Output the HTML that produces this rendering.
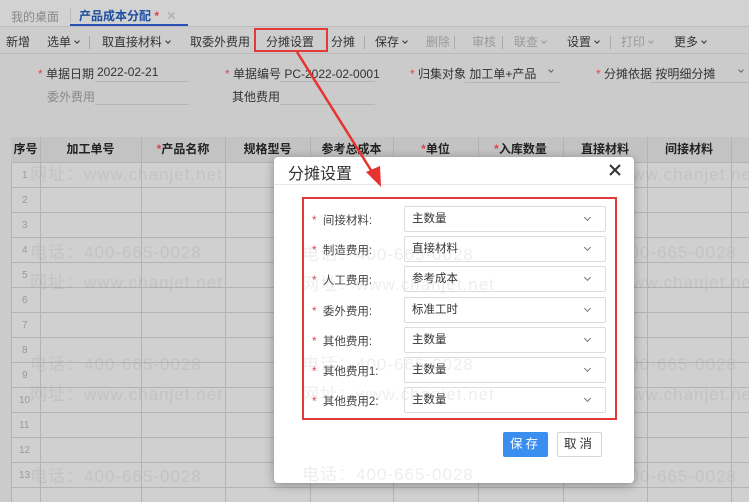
<!DOCTYPE html>
<html><head><meta charset="utf-8"><style>
*{margin:0;padding:0;box-sizing:border-box}
body{width:749px;height:502px;overflow:hidden;background:#cbcbcb;font-family:"Liberation Sans","Noto Sans CJK SC",sans-serif;font-size:12px;color:#333;position:relative}
.a{position:absolute;white-space:nowrap}
.wm{position:absolute;font-size:17px;color:rgba(150,150,150,.22);white-space:nowrap;letter-spacing:1px}
.th{position:absolute;top:137px;height:25px;line-height:25px;font-weight:bold;font-size:12px;color:#222;text-align:center}
.st{color:#d9474f}
.sel{position:absolute;left:404px;width:202px;height:26px;border:1px solid #dcdcdc;border-radius:2px;background:#fff;line-height:24px;padding-left:7px;font-size:11.5px;color:#333}
.sel i{position:absolute;right:15px;top:8px;width:5px;height:5px;border-right:1.3px solid #777;border-bottom:1.3px solid #777;transform:rotate(45deg)}
.lb{position:absolute;left:312px;font-size:11.5px;color:#444}
.tb{position:absolute;top:33px;font-size:12px;color:#333}
.dim{color:#999}
.cv{display:inline-block;width:4px;height:4px;border-right:1.3px solid currentColor;border-bottom:1.3px solid currentColor;transform:rotate(45deg);margin-left:4px;vertical-align:3px}
</style></head><body>
<div class="a" style="left:0;top:0;width:749px;height:26px;background:#d2d2d2"></div>
<div class="a" style="left:11px;top:8px;color:#888">我的桌面</div>
<div class="a" style="left:70px;top:8px;width:1px;height:14px;background:#bbb"></div>
<div class="a" style="left:79px;top:7px;color:#1d4fa0;font-weight:bold">产品成本分配 <span class="st">*</span> <span style="color:#aaa;font-weight:normal;margin-left:4px">✕</span></div>
<div class="a" style="left:70px;top:24px;width:118px;height:2px;background:#2c4fb5"></div>
<div class="a" style="left:0;top:26px;width:749px;height:1px;background:#bdbdbd"></div>
<div class="a" style="left:0;top:27px;width:749px;height:26px;background:#cdcdcd"></div>
<div class="a" style="left:0;top:53px;width:749px;height:1px;background:#bbb"></div>
<div class="tb" style="left:6px">新增</div>
<div class="tb" style="left:47px">选单<span class="cv"></span></div>
<div class="a" style="left:89px;top:36px;width:1px;height:13px;background:#aaa"></div>
<div class="tb" style="left:102px">取直接材料<span class="cv"></span></div>
<div class="tb" style="left:190px">取委外费用</div>
<div class="a" style="left:254px;top:28px;width:74px;height:24px;border:2px solid #e23a3a"></div>
<div class="tb" style="left:266px">分摊设置</div>
<div class="tb" style="left:331px">分摊</div>
<div class="a" style="left:364px;top:36px;width:1px;height:13px;background:#aaa"></div>
<div class="tb" style="left:375px">保存<span class="cv"></span></div>
<div class="tb dim" style="left:426px">删除</div>
<div class="a" style="left:454px;top:36px;width:1px;height:13px;background:#aaa"></div>
<div class="tb dim" style="left:472px">审核</div>
<div class="a" style="left:502px;top:36px;width:1px;height:13px;background:#aaa"></div>
<div class="tb dim" style="left:514px">联查<span class="cv"></span></div>
<div class="tb" style="left:567px">设置<span class="cv"></span></div>
<div class="a" style="left:610px;top:36px;width:1px;height:13px;background:#aaa"></div>
<div class="tb dim" style="left:621px">打印<span class="cv"></span></div>
<div class="tb" style="left:674px">更多<span class="cv"></span></div>
<div class="a" style="left:38px;top:65px"><span class="st">*</span> 单据日期</div>
<div class="a" style="left:97px;top:65px">2022-02-21</div>
<div class="a" style="left:95px;top:81px;width:94px;height:1px;background:#b5b5b5"></div>
<div class="a" style="left:47px;top:88px;color:#888">委外费用</div>
<div class="a" style="left:95px;top:104px;width:94px;height:1px;background:#b5b5b5"></div>
<div class="a" style="left:225px;top:65px"><span class="st">*</span> 单据编号 PC-2022-02-0001</div>
<div class="a" style="left:280px;top:81px;width:95px;height:1px;background:#b5b5b5"></div>
<div class="a" style="left:232px;top:88px">其他费用</div>
<div class="a" style="left:280px;top:104px;width:95px;height:1px;background:#b5b5b5"></div>
<div class="a" style="left:410px;top:65px"><span class="st">*</span> 归集对象 加工单+产品</div>
<div class="a" style="left:545px;top:64px;color:#666"><span class="cv"></span></div>
<div class="a" style="left:465px;top:82px;width:95px;height:1px;background:#b5b5b5"></div>
<div class="a" style="left:596px;top:65px"><span class="st">*</span> 分摊依据 按明细分摊</div>
<div class="a" style="left:735px;top:64px;color:#666"><span class="cv"></span></div>
<div class="a" style="left:650px;top:82px;width:99px;height:1px;background:#b5b5b5"></div>
<div class="a" style="left:11px;top:137px;width:738px;height:365px;background:#d0d0d0;border-left:1px solid #b5b5b5;border-top:1px solid #b5b5b5"></div>
<div class="a" style="left:11px;top:137px;width:738px;height:25px;background:#c3c3c3"></div>
<svg class="a" style="left:0;top:0" width="749" height="502">
<g stroke="#b3b3b3" stroke-width="1">
<line x1="40.5" y1="137" x2="40.5" y2="502"/><line x1="141.5" y1="137" x2="141.5" y2="502"/><line x1="225.5" y1="137" x2="225.5" y2="502"/><line x1="310.5" y1="137" x2="310.5" y2="502"/><line x1="393.5" y1="137" x2="393.5" y2="502"/><line x1="478.5" y1="137" x2="478.5" y2="502"/><line x1="563.5" y1="137" x2="563.5" y2="502"/><line x1="647.5" y1="137" x2="647.5" y2="502"/><line x1="731.5" y1="137" x2="731.5" y2="502"/>
<line x1="11" y1="162.5" x2="749" y2="162.5"/><line x1="11" y1="187.5" x2="749" y2="187.5"/><line x1="11" y1="212.5" x2="749" y2="212.5"/><line x1="11" y1="237.5" x2="749" y2="237.5"/><line x1="11" y1="262.5" x2="749" y2="262.5"/><line x1="11" y1="287.5" x2="749" y2="287.5"/><line x1="11" y1="312.5" x2="749" y2="312.5"/><line x1="11" y1="337.5" x2="749" y2="337.5"/><line x1="11" y1="362.5" x2="749" y2="362.5"/><line x1="11" y1="387.5" x2="749" y2="387.5"/><line x1="11" y1="412.5" x2="749" y2="412.5"/><line x1="11" y1="437.5" x2="749" y2="437.5"/><line x1="11" y1="462.5" x2="749" y2="462.5"/><line x1="11" y1="487.5" x2="749" y2="487.5"/>
</g>
<g fill="#999" font-size="10" font-family="Liberation Sans">
<text x="22" y="178">1</text><text x="22" y="203">2</text><text x="22" y="228">3</text><text x="22" y="253">4</text><text x="22" y="278">5</text><text x="22" y="303">6</text><text x="22" y="328">7</text><text x="22" y="353">8</text><text x="22" y="378">9</text><text x="19" y="403">10</text><text x="19" y="428">11</text><text x="19" y="453">12</text><text x="19" y="478">13</text>
</g>
</svg>
<div class="th" style="left:11px;width:29px">序号</div>
<div class="th" style="left:40px;width:101px">加工单号</div>
<div class="th" style="left:141px;width:84px"><span class="st">*</span>产品名称</div>
<div class="th" style="left:225px;width:85px">规格型号</div>
<div class="th" style="left:310px;width:83px">参考总成本</div>
<div class="th" style="left:393px;width:85px"><span class="st">*</span>单位</div>
<div class="th" style="left:478px;width:85px"><span class="st">*</span>入库数量</div>
<div class="th" style="left:563px;width:84px">直接材料</div>
<div class="th" style="left:647px;width:84px">间接材料</div>
<div class="wm" style="left:30px;top:238px">电话：400-665-0028</div>
<div class="wm" style="left:30px;top:268px">网址：www.chanjet.net</div>
<div class="wm" style="left:30px;top:350px">电话：400-665-0028</div>
<div class="wm" style="left:30px;top:380px">网址：www.chanjet.net</div>
<div class="wm" style="left:30px;top:462px">电话：400-665-0028</div>
<div class="wm" style="left:30px;top:160px">网址：www.chanjet.net</div>
<div class="wm" style="left:565px;top:160px">网址：www.chanjet.net</div>
<div class="wm" style="left:565px;top:238px">电话：400-665-0028</div>
<div class="wm" style="left:565px;top:268px">网址：www.chanjet.net</div>
<div class="wm" style="left:565px;top:350px">电话：400-665-0028</div>
<div class="wm" style="left:565px;top:380px">网址：www.chanjet.net</div>
<div class="wm" style="left:565px;top:462px">电话：400-665-0028</div>
<div class="a" style="left:274px;top:157px;width:360px;height:326px;background:#fff;border-radius:4px;box-shadow:0 2px 10px rgba(0,0,0,.35)"></div>
<div class="a" style="left:288px;top:160px;font-size:16px;color:#333">分摊设置</div>
<svg class="a" style="left:608px;top:163px" width="14" height="14"><path d="M2 2L12 12M12 2L2 12" stroke="#333" stroke-width="2"/></svg>
<div class="a" style="left:274px;top:184px;width:360px;height:1px;background:#e8e8e8"></div>
<div class="a" style="left:302px;top:197px;width:315px;height:223px;border:2px solid #e23a3a"></div>
<div class="lb" style="top:212px"><span class="st">*</span>&nbsp; 间接材料:</div>
<div class="lb" style="top:242px"><span class="st">*</span>&nbsp; 制造费用:</div>
<div class="lb" style="top:272px"><span class="st">*</span>&nbsp; 人工费用:</div>
<div class="lb" style="top:303px"><span class="st">*</span>&nbsp; 委外费用:</div>
<div class="lb" style="top:333px"><span class="st">*</span>&nbsp; 其他费用:</div>
<div class="lb" style="top:363px"><span class="st">*</span>&nbsp; 其他费用1:</div>
<div class="lb" style="top:393px"><span class="st">*</span>&nbsp; 其他费用2:</div>
<div class="sel" style="top:206px">主数量<i></i></div>
<div class="sel" style="top:236px">直接材料<i></i></div>
<div class="sel" style="top:266px">参考成本<i></i></div>
<div class="sel" style="top:297px">标准工时<i></i></div>
<div class="sel" style="top:327px">主数量<i></i></div>
<div class="sel" style="top:357px">主数量<i></i></div>
<div class="sel" style="top:387px">主数量<i></i></div>
<div class="a" style="left:503px;top:432px;width:45px;height:25px;background:#3a8ef0;border-radius:2px;color:#fff;text-align:center;line-height:25px;font-size:12.5px;letter-spacing:3px">保存</div>
<div class="a" style="left:557px;top:432px;width:45px;height:25px;background:#fff;border:1px solid #d5d5d5;border-radius:2px;color:#333;text-align:center;line-height:23px;font-size:12.5px;letter-spacing:3px">取消</div>
<div class="wm" style="left:302px;top:240px;color:rgba(150,150,150,.16)">电话：400-665-0028</div>
<div class="wm" style="left:302px;top:270px;color:rgba(150,150,150,.16)">网址：www.chanjet.net</div>
<div class="wm" style="left:302px;top:350px;color:rgba(150,150,150,.16)">电话：400-665-0028</div>
<div class="wm" style="left:302px;top:380px;color:rgba(150,150,150,.16)">网址：www.chanjet.net</div>
<div class="wm" style="left:302px;top:460px;color:rgba(150,150,150,.16)">电话：400-665-0028</div>
<svg class="a" style="left:0;top:0" width="749" height="502">
<line x1="297" y1="52" x2="374" y2="175" stroke="#e8322f" stroke-width="2.5"/>
<polygon points="381,187 366,172 380,166" fill="#e8322f"/>
</svg>
</body></html>
